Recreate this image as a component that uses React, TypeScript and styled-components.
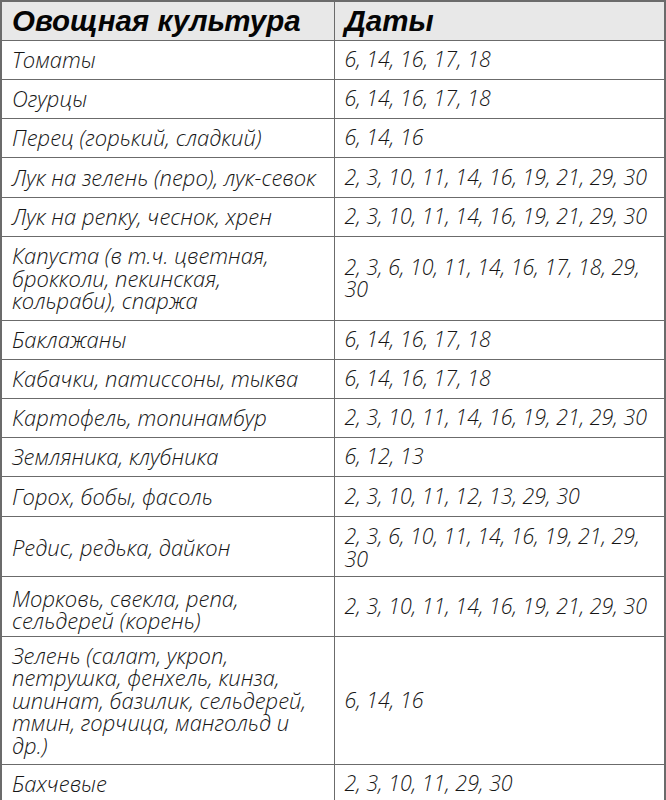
import styled, { createGlobalStyle } from 'styled-components';

const GlobalStyle = createGlobalStyle`
  html, body {
    margin: 0;
    padding: 0;
    background: #ffffff;
  }
`;

type Row = {
  crop: string[];
  dates: string[];
  height: number;
};

const rows: Row[] = [
  { crop: ['Томаты'], dates: ['6, 14, 16, 17, 18'], height: 39 },
  { crop: ['Огурцы'], dates: ['6, 14, 16, 17, 18'], height: 39 },
  { crop: ['Перец (горький, сладкий)'], dates: ['6, 14, 16'], height: 39 },
  { crop: ['Лук на зелень (перо), лук-севок'], dates: ['2, 3, 10, 11, 14, 16, 19, 21, 29, 30'], height: 40 },
  { crop: ['Лук на репку, чеснок, хрен'], dates: ['2, 3, 10, 11, 14, 16, 19, 21, 29, 30'], height: 39 },
  {
    crop: ['Капуста (в т.ч. цветная,', 'брокколи, пекинская,', 'кольраби), спаржа'],
    dates: ['2, 3, 6, 10, 11, 14, 16, 17, 18, 29,', '30'],
    height: 84,
  },
  { crop: ['Баклажаны'], dates: ['6, 14, 16, 17, 18'], height: 39 },
  { crop: ['Кабачки, патиссоны, тыква'], dates: ['6, 14, 16, 17, 18'], height: 39 },
  { crop: ['Картофель, топинамбур'], dates: ['2, 3, 10, 11, 14, 16, 19, 21, 29, 30'], height: 39 },
  { crop: ['Земляника, клубника'], dates: ['6, 12, 13'], height: 39 },
  { crop: ['Горох, бобы, фасоль'], dates: ['2, 3, 10, 11, 12, 13, 29, 30'], height: 40 },
  { crop: ['Редис, редька, дайкон'], dates: ['2, 3, 6, 10, 11, 14, 16, 19, 21, 29,', '30'], height: 60 },
  { crop: ['Морковь, свекла, репа,', 'сельдерей (корень)'], dates: ['2, 3, 10, 11, 14, 16, 19, 21, 29, 30'], height: 60 },
  {
    crop: [
      'Зелень (салат, укроп,',
      'петрушка, фенхель, кинза,',
      'шпинат, базилик, сельдерей,',
      'тмин, горчица, мангольд и',
      'др.)',
    ],
    dates: ['6, 14, 16'],
    height: 128,
  },
  { crop: ['Бахчевые'], dates: ['2, 3, 10, 11, 29, 30'], height: 39 },
];

const App = () => {
  return (
    <>
      <GlobalStyle />
      <Table>
        <colgroup>
          <col style={{ width: 333 }} />
          <col />
        </colgroup>
        <thead>
          <HeadRow>
            <HeadCell>Овощная культура</HeadCell>
            <HeadCell>Даты</HeadCell>
          </HeadRow>
        </thead>
        <tbody>
          {rows.map((row, i) => (
            <BodyRow key={i} $height={row.height}>
              <Cell $size={22} $shift={row.crop.length === 2 ? 6 : row.crop.length === 1 && row.dates.length > 1 ? 3 : 0}>
                {row.crop.map((line, j) => (
                  <Line key={j}>{line}</Line>
                ))}
              </Cell>
              <Cell $size={21.4} $shift={row.dates.length > 1 && row.crop.length === 1 ? 3 : 0}>
                {row.dates.map((line, j) => (
                  <Line key={j}>{line}</Line>
                ))}
              </Cell>
            </BodyRow>
          ))}
        </tbody>
      </Table>
    </>
  );
};

const Table = styled.table`
  width: 666px;
  height: 800px;
  border-collapse: collapse;
  table-layout: fixed;
  border: 2px solid #6b6b6b;
`;

const HeadRow = styled.tr`
  height: 39px;
  background: #e8e8e8;
`;

const HeadCell = styled.th`
  padding: 0 10px;
  border: 1.5px solid #6b6b6b;
  text-align: left;
  vertical-align: middle;
  font-family: 'Liberation Sans', Arial, sans-serif;
  font-style: italic;
  font-weight: 700;
  font-size: 29.5px;
  line-height: 36px;
  color: #050505;
  white-space: nowrap;
`;

const BodyRow = styled.tr<{ $height: number }>`
  height: ${({ $height }) => $height}px;
`;

const Cell = styled.td<{ $size: number; $shift?: number }>`
  padding: ${({ $shift = 0 }) => `${$shift}px 10px 0`};
  border: 1.5px solid #6b6b6b;
  vertical-align: middle;
  font-family: 'Open Sans', 'Noto Sans', sans-serif;
  font-style: italic;
  font-weight: 300;
  font-size: ${({ $size }) => $size}px;
  line-height: 22.5px;
  color: #161616;
  white-space: nowrap;
`;

const Line = styled.div`
  display: block;
`;

export default App;
